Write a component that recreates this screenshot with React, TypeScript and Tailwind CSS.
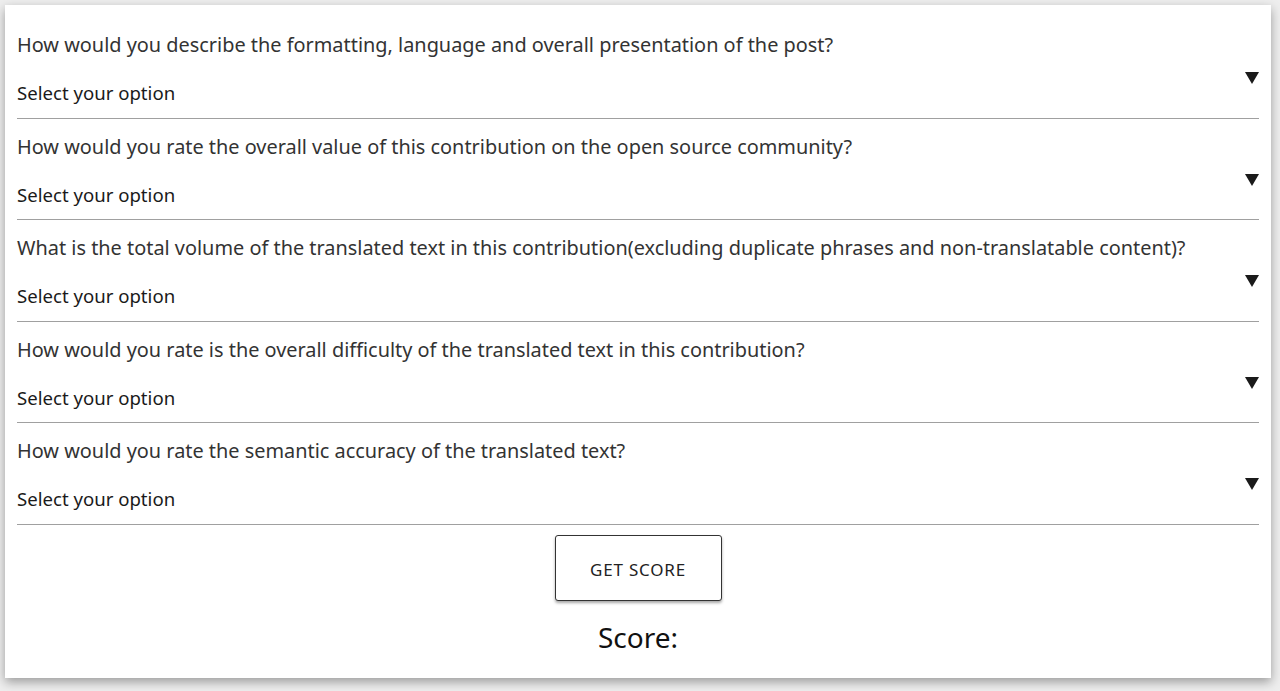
import React from 'react';

const questions = [
  "How would you describe the formatting, language and overall presentation of the post?",
  "How would you rate the overall value of this contribution on the open source community?",
  "What is the total volume of the translated text in this contribution(excluding duplicate phrases and non-translatable content)?",
  "How would you rate is the overall difficulty of the translated text in this contribution?",
  "How would you rate the semantic accuracy of the translated text?",
];

const App: React.FC = () => {
  return (
    <div className="min-h-[691px] w-full bg-[#eeeeee] pt-[5px] font-['Noto_Sans',sans-serif]">
      <div className="mx-[5px] h-[673px] w-[1266px] bg-white px-[12px] pt-[12px] shadow-[0_4px_10px_rgba(0,0,0,0.35)]">
        {questions.map((q) => (
          <div key={q} className="border-b border-[#a0a0a0] pb-[10.5px] pt-[14px]">
            <p className="text-[19.9px] leading-[28px] text-[#333333]">{q}</p>
            <div className="flex items-start justify-between">
              <span className="mt-[20px] text-[18.6px] leading-[28px] text-[#1a1a1a]">Select your option</span>
              <svg width="14" height="12" viewBox="0 0 14 12" className="mt-[13px]">
                <polygon points="0,0 14,0 7,12" fill="#1a1a1a" />
              </svg>
            </div>
          </div>
        ))}
        <div className="flex flex-col items-center pt-[10px]">
          <button className="h-[66px] w-[167px] rounded-[3px] border border-[#333333] bg-white pt-[4px] text-[17px] tracking-[0.8px] text-[#222222] shadow-[0_2px_3px_rgba(0,0,0,0.35)]">
            GET SCORE
          </button>
          <div className="mt-[18px] text-[28px] leading-[36px] text-[#111111]">Score:</div>
        </div>
      </div>
    </div>
  );
};

export default App;
